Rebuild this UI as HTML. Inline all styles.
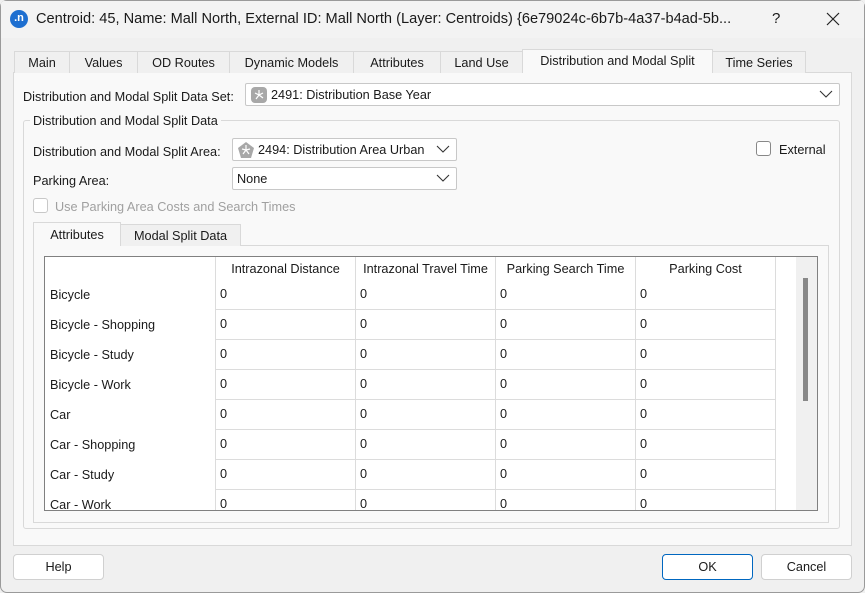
<!DOCTYPE html>
<html><head><meta charset="utf-8"><style>
*{box-sizing:border-box;margin:0;padding:0}
body{width:865px;height:593px;overflow:hidden;background:#f0f0f0;font-family:"Liberation Sans",sans-serif;font-size:12.7px;color:#1a1a1a;position:relative}
.a{position:absolute}
.win{left:0;top:0;width:865px;height:593px;border-radius:7px;background:#f0f0f0;overflow:hidden;box-shadow:inset 0 0 0 1px #9a9a9a}
.title{left:1px;top:1px;width:863px;height:37px;background:#f3f3f3}
.tab{top:51px;height:22px;border:1px solid #d9d9d9;border-bottom:none;background:#f0f0f0;text-align:center;line-height:22px;white-space:nowrap}
.page{left:13px;top:72px;width:839px;height:474px;border:1px solid #d9d9d9;background:#f9f9f9}
.combo{height:23px;border:1px solid #c8c8c8;background:#fff;border-radius:2px;line-height:22px}
.chev{position:absolute;right:6px;top:6px}
.cb{width:15px;height:15px;border:1px solid #888;border-radius:3px;background:#fff}
.btn{top:554px;height:26px;border:1px solid #d0d0d0;border-radius:4px;background:#fff;text-align:center;line-height:25px}
.cell{position:absolute;border-right:1px solid #dcdcdc;border-bottom:1px solid #dcdcdc;background:#fff;padding-left:4px;line-height:29px}
</style></head><body>
<div class="a win">
<div class="a title"></div>
<div class="a" style="left:10px;top:10px;width:18px;height:18px;border-radius:50%;background:#1e6fd0;color:#fff;font-size:11px;font-weight:bold;text-align:center;line-height:17px">.n</div>
<div class="a" style="left:36px;top:11px;font-size:14.6px;color:#1a1a1a;white-space:nowrap">Centroid: 45, Name: Mall North, External ID: Mall North (Layer: Centroids) {6e79024c-6b7b-4a37-b4ad-5b...</div>
<div class="a" style="left:772px;top:10px;font-size:15px">?</div>
<svg class="a" style="left:826px;top:12px" width="14" height="14"><path d="M1 1L13 13M13 1L1 13" stroke="#222" stroke-width="1.2"/></svg>

<div class="a page"></div>
<div class="a tab" style="left:14px;width:56px">Main</div>
<div class="a tab" style="left:69px;width:69px">Values</div>
<div class="a tab" style="left:137px;width:93px">OD Routes</div>
<div class="a tab" style="left:229px;width:125px">Dynamic Models</div>
<div class="a tab" style="left:353px;width:88px">Attributes</div>
<div class="a tab" style="left:440px;width:83px">Land Use</div>
<div class="a tab" style="left:522px;top:49px;height:24px;width:191px;background:#f9f9f9;line-height:23px">Distribution and Modal Split</div>
<div class="a tab" style="left:712px;width:94px">Time Series</div>

<div class="a" style="left:23px;top:90px">Distribution and Modal Split Data Set:</div>
<div class="a combo" style="left:245px;top:83px;width:595px">
 <svg class="a" style="left:5px;top:3px" width="16" height="16"><rect x="0" y="0" width="16" height="16" rx="4" fill="#a8a8a8"/><path d="M8 8L8 3M8 8L12 6M8 8L12 11M8 8L5 12M8 8L4 6" stroke="#fff" stroke-width="1.2"/></svg>
 <span class="a" style="left:25px;top:0">2491: Distribution Base Year</span>
 <svg class="chev" width="14" height="9"><path d="M1 1L7 7L13 1" fill="none" stroke="#333" stroke-width="1.1"/></svg></div>

<div class="a" style="left:23px;top:120px;width:817px;height:409px;border:1px solid #d9d9d9;border-radius:3px"></div>
<div class="a" style="left:30px;top:114px;background:#f9f9f9;padding:0 3px">Distribution and Modal Split Data</div>

<div class="a" style="left:33px;top:145px">Distribution and Modal Split Area:</div>
<div class="a combo" style="left:232px;top:138px;width:225px">
 <svg class="a" style="left:4px;top:2px" width="18" height="18"><path d="M9 1L17 7L14 17L4 17L1 7Z" fill="#a8a8a8"/><path d="M9 9L9 4M9 9L13 8M9 9L12 13M9 9L6 13M9 9L5 8" stroke="#fff" stroke-width="1.2"/></svg>
 <span class="a" style="left:25px;top:0;white-space:nowrap">2494: Distribution Area Urban</span>
 <svg class="chev" width="14" height="9"><path d="M1 1L7 7L13 1" fill="none" stroke="#333" stroke-width="1.1"/></svg></div>
<div class="a" style="left:33px;top:174px">Parking Area:</div>
<div class="a combo" style="left:232px;top:167px;width:225px"><span class="a" style="left:4px;top:0">None</span>
 <svg class="chev" width="14" height="9"><path d="M1 1L7 7L13 1" fill="none" stroke="#333" stroke-width="1.1"/></svg></div>

<div class="a cb" style="left:756px;top:141px"></div>
<div class="a" style="left:779px;top:143px">External</div>
<div class="a cb" style="left:33px;top:198px;border-color:#c8c8c8"></div>
<div class="a" style="left:55px;top:200px;color:#a0a0a0">Use Parking Area Costs and Search Times</div>

<div class="a" style="left:33px;top:245px;width:796px;height:278px;border:1px solid #d9d9d9;background:#f9f9f9"></div>
<div class="a tab" style="left:33px;top:222px;height:24px;width:88px;background:#f9f9f9;line-height:24px">Attributes</div>
<div class="a tab" style="left:120px;top:224px;width:121px;line-height:23px">Modal Split Data</div>

<div class="a" style="left:44px;top:256px;width:774px;height:255px;border:1px solid #808080;background:#fff;overflow:hidden">
 <div class="a" style="left:751px;top:0;width:22px;height:254px;background:#f0f0f0"></div>
 <div class="a" style="left:758px;top:21px;width:5px;height:123px;background:#888"></div>
 <div class="a" style="left:170px;top:0;width:1px;height:23px;background:#dcdcdc"></div>
 <div class="a" style="left:310px;top:0;width:1px;height:23px;background:#dcdcdc"></div>
 <div class="a" style="left:450px;top:0;width:1px;height:23px;background:#dcdcdc"></div>
 <div class="a" style="left:590px;top:0;width:1px;height:23px;background:#dcdcdc"></div>
 <div class="a" style="left:730px;top:0;width:1px;height:23px;background:#dcdcdc"></div>
 <div class="a" style="left:171px;top:5px;width:139px;text-align:center">Intrazonal Distance</div>
 <div class="a" style="left:311px;top:5px;width:139px;text-align:center;white-space:nowrap">Intrazonal Travel Time</div>
 <div class="a" style="left:451px;top:5px;width:139px;text-align:center">Parking Search Time</div>
 <div class="a" style="left:591px;top:5px;width:139px;text-align:center">Parking Cost</div>
 <div id="rows"></div>
</div>

<div class="a btn" style="left:13px;width:91px">Help</div>
<div class="a btn" style="left:662px;width:91px;border:1px solid #0067c0">OK</div>
<div class="a btn" style="left:761px;width:91px">Cancel</div>
</div>
<script>
var n=["Bicycle","Bicycle - Shopping","Bicycle - Study","Bicycle - Work","Car","Car - Shopping","Car - Study","Car - Work"],h="";
for(var i=0;i<8;i++){var t=23+i*30;
h+='<div class="a" style="left:5px;top:'+(t+8)+'px">'+n[i]+'</div>';
for(var c=0;c<4;c++)h+='<div class="cell" style="left:'+(170+c*140)+'px;top:'+t+'px;width:141px;height:30px;border-left:1px solid #dcdcdc">0</div>';}
document.getElementById("rows").innerHTML=h;
</script>
</body></html>
